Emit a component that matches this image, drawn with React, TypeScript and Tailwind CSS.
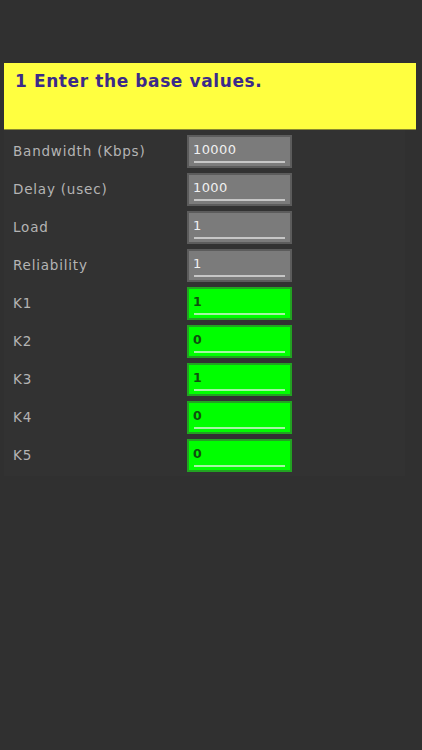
import React from "react";

type Field = {
  label: string;
  value: string;
  kind: "base" | "k";
};

const fields: Field[] = [
  { label: "Bandwidth (Kbps)", value: "10000", kind: "base" },
  { label: "Delay (usec)", value: "1000", kind: "base" },
  { label: "Load", value: "1", kind: "base" },
  { label: "Reliability", value: "1", kind: "base" },
  { label: "K1", value: "1", kind: "k" },
  { label: "K2", value: "0", kind: "k" },
  { label: "K3", value: "1", kind: "k" },
  { label: "K4", value: "0", kind: "k" },
  { label: "K5", value: "0", kind: "k" },
];

function ValueBox({ value, kind }: { value: string; kind: Field["kind"] }) {
  const isK = kind === "k";
  return (
    <div
      className={
        isK
          ? "w-[105px] h-[33px] border-2 border-[#22a322] bg-[#00ff00] px-[4px] pt-[5px] flex flex-col"
          : "w-[105px] h-[33px] border-2 border-[#5c5c5c] bg-[#7b7b7b] px-[4px] pt-[5px] flex flex-col"
      }
    >
      <span
        className={
          isK
            ? "text-[12.5px] leading-[15px] font-bold text-[#0f4f0f]"
            : "text-[13px] leading-[15px] tracking-[0.4px] text-[#f0f0f0]"
        }
      >
        {value}
      </span>
      <div
        className={
          isK
            ? "mt-[4px] mx-[1px] h-[2px] bg-[#a4f5a4]"
            : "mt-[4px] mx-[1px] h-[2px] bg-[#c6c6c6]"
        }
      />
    </div>
  );
}

export default function App() {
  return (
    <div
      className="min-h-[750px] w-full bg-[#303030] pt-[63px]"
      style={{ fontFamily: "'DejaVu Sans', Verdana, sans-serif" }}
    >
      <div className="ml-[4px] mr-[6px] h-[67px] bg-[#ffff40] border-b border-[#8a8a30] px-[11px] pt-[6px]">
        <h1 className="text-[17px] leading-[24px] font-bold tracking-[0.6px] text-[#3b2a8a]">
          1 Enter the base values.
        </h1>
      </div>

      <div className="ml-[4px] mr-[17px] bg-[#323232] pt-[5px] pb-[4px] flex flex-col gap-[5px]">
        {fields.map((f) => (
          <div key={f.label} className="flex items-center">
            <span className="w-[183px] pl-[9px] text-[13.5px] tracking-[0.8px] text-[#b4b4b4]">
              {f.label}
            </span>
            <ValueBox value={f.value} kind={f.kind} />
          </div>
        ))}
      </div>
    </div>
  );
}
